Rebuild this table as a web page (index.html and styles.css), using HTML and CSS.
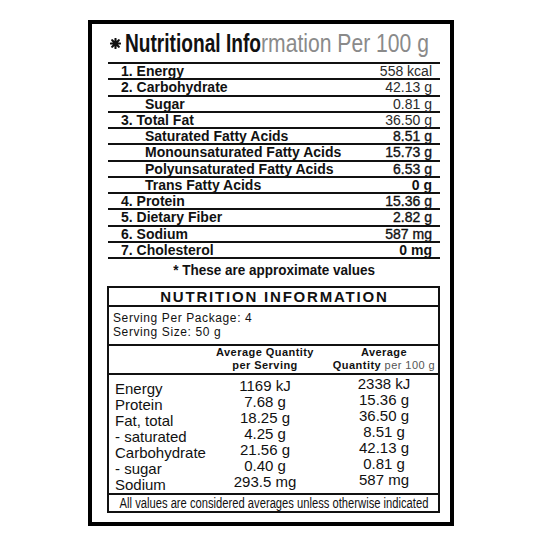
FILE: index.html
```html
<!DOCTYPE html>
<html>
<head>
<meta charset="utf-8">
<link rel="stylesheet" href="styles.css">
</head>
<body>
<div class="frame">
  <div class="title">
    <svg class="star" width="11" height="11" viewBox="0 0 12 12"><g stroke="#111" stroke-width="2.3" stroke-linecap="round"><path d="M6 0.9V11.1M0.9 6H11.1M2.4 2.4L9.6 9.6M9.6 2.4L2.4 9.6"/></g></svg>
    <span class="t-bold">Nutritional Info</span><span class="t-faded">rmation Per 100 g</span>
  </div>
  <div class="facts">
    <div class="row"><span class="lbl">1. Energy</span><span class="val light">558 kcal</span></div>
    <div class="row"><span class="lbl">2. Carbohydrate</span><span class="val light">42.13 g</span></div>
    <div class="row sub"><span class="lbl">Sugar</span><span class="val light">0.81 g</span></div>
    <div class="row"><span class="lbl">3. Total Fat</span><span class="val light">36.50 g</span></div>
    <div class="row sub"><span class="lbl">Saturated Fatty Acids</span><span class="val">8.51 g</span></div>
    <div class="row sub"><span class="lbl">Monounsaturated Fatty Acids</span><span class="val">15.73 g</span></div>
    <div class="row sub"><span class="lbl">Polyunsaturated Fatty Acids</span><span class="val">6.53 g</span></div>
    <div class="row sub"><span class="lbl">Trans Fatty Acids</span><span class="val strong">0 g</span></div>
    <div class="row"><span class="lbl">4. Protein</span><span class="val">15.36 g</span></div>
    <div class="row"><span class="lbl">5. Dietary Fiber</span><span class="val">2.82 g</span></div>
    <div class="row"><span class="lbl">6. Sodium</span><span class="val">587 mg</span></div>
    <div class="row"><span class="lbl">7. Cholesterol</span><span class="val strong">0 mg</span></div>
  </div>
  <div class="approx"><span>* These are approximate values</span></div>
  <div class="ni">
    <div class="ni-head">NUTRITION INFORMATION</div>
    <div class="ni-serv">Serving Per Package: 4<br>Serving Size: 50 g</div>
    <div class="ni-cols">
      <div></div>
      <div><b>Average Quantity</b><br><b>per Serving</b></div>
      <div class="c2h"><b>Average</b><br><b>Quantity</b> <span class="gray">per 100 g</span></div>
    </div>
    <div class="ni-data">
      <div class="c-lbl">
        <div>Energy</div><div>Protein</div><div>Fat, total</div><div>- saturated</div><div>Carbohydrate</div><div>- sugar</div><div>Sodium</div>
      </div>
      <div class="c-1">
        <div>1169 kJ</div><div>7.68 g</div><div>18.25 g</div><div>4.25 g</div><div>21.56 g</div><div>0.40 g</div><div>293.5 mg</div>
      </div>
      <div class="c-2">
        <div>2338 kJ</div><div>15.36 g</div><div>36.50 g</div><div>8.51 g</div><div>42.13 g</div><div>0.81 g</div><div>587 mg</div>
      </div>
    </div>
    <div class="ni-foot"><span>All values are considered averages unless otherwise indicated</span></div>
  </div>
</div>
</body>
</html>
```

FILE: styles.css
```css
body {
  margin: 0;
  background: #fff;
  font-family: "Liberation Sans", Arial, sans-serif;
  color: #111;
}

.frame {
  box-sizing: border-box;
  width: 366px;
  height: 506px;
  margin: 20px 0 0 88px;
  border: 4px solid #000;
}

.title {
  display: flex;
  align-items: center;
  margin-top: 7px;
  padding-left: 18px;
  height: 25px;
  font-size: 25px;
  line-height: 25px;
  white-space: nowrap;
}

.star {
  flex: none;
  margin-right: 4px;
}

.t-bold {
  flex: none;
  display: inline-block;
  font-weight: 700;
  color: #111;
  transform: scaleX(0.765);
  transform-origin: 0 50%;
  margin-right: -41.8px;
}

.t-faded {
  flex: none;
  display: inline-block;
  font-weight: 400;
  color: #8a8a8a;
  transform: scaleX(0.845);
  transform-origin: 0 50%;
  margin-right: -31px;
}

.facts {
  margin: 6px 0 0 16px;
  width: 332px;
  border-top: 2px solid #111;
}

.row {
  display: flex;
  justify-content: space-between;
  box-sizing: border-box;
  height: 16.25px;
  border-bottom: 2px solid #111;
  line-height: 14.25px;
  font-size: 14px;
  padding: 0 8px 0 13px;
  white-space: nowrap;
}

.row.sub {
  padding-left: 37px;
}

.lbl {
  font-weight: 700;
}

.val {
  -webkit-text-stroke: 0.35px #111;
}

.val.light {
  color: #2a2a2a;
  -webkit-text-stroke: 0;
}

.val.strong {
  font-weight: 700;
  -webkit-text-stroke: 0;
}

.approx {
  display: flex;
  justify-content: center;
  margin: 2px 0 0 16px;
  width: 332px;
  line-height: 18px;
  font-size: 15px;
  font-weight: 700;
}

.approx span {
  flex: none;
  display: inline-block;
  transform: scaleX(0.9);
  white-space: nowrap;
}

.ni {
  box-sizing: border-box;
  margin: 7.2px 0 0 15px;
  width: 333px;
  border: 2px solid #111;
}

.ni-head {
  height: 17px;
  line-height: 17px;
  border-bottom: 2px solid #111;
  text-align: center;
  font-weight: 700;
  font-size: 15px;
  letter-spacing: 1.8px;
  padding-left: 1.8px;
}

.ni-serv {
  padding: 5px 0 5px 4px;
  font-size: 12px;
  letter-spacing: 0.6px;
  line-height: 13.5px;
  border-bottom: 2px solid #111;
}

.ni-cols {
  display: grid;
  grid-template-columns: 100px 112px 1fr;
  font-size: 11px;
  letter-spacing: 0.45px;
  line-height: 12.5px;
  padding: 0 0 2px;
  border-bottom: 2px solid #111;
  text-align: center;
  white-space: nowrap;
}

.c2h {
  padding-left: 9px;
}

.gray {
  color: #555;
}

.ni-data {
  display: grid;
  grid-template-columns: 100px 112px 1fr;
  font-size: 15px;
  line-height: 16px;
  white-space: nowrap;
}

.c-lbl {
  padding: 6px 0 0 6px;
}

.c-1 {
  padding-top: 2.5px;
  text-align: center;
}

.c-2 {
  padding-top: 0.5px;
  padding-left: 9px;
  text-align: center;
}

.ni-foot {
  display: flex;
  justify-content: center;
  border-top: 2px solid #111;
  height: 16px;
  line-height: 16px;
  font-size: 14px;
}

.ni-foot span {
  flex: none;
  display: inline-block;
  transform: scaleX(0.8);
  white-space: nowrap;
}
```
